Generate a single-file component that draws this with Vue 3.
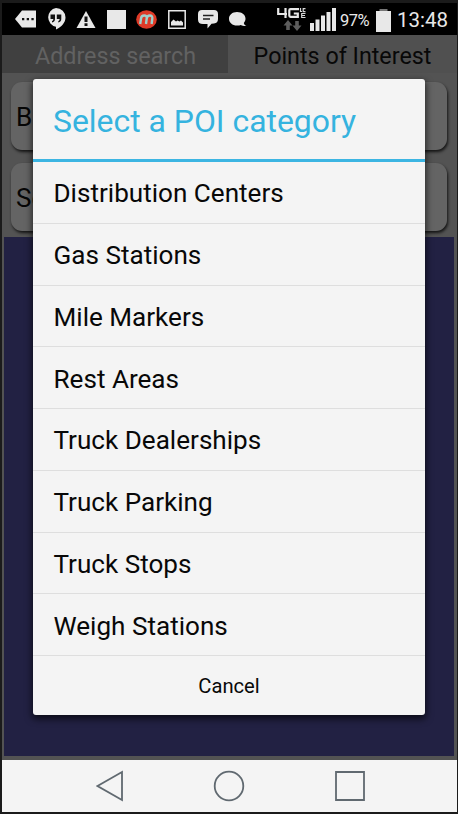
<script setup>
const categories = [
  'Distribution Centers',
  'Gas Stations',
  'Mile Markers',
  'Rest Areas',
  'Truck Dealerships',
  'Truck Parking',
  'Truck Stops',
  'Weigh Stations',
]
</script>

<template>
  <div class="device">
    <header class="status">
      <div class="notifications">
        <svg width="22" height="18" viewBox="0 0 22 18">
          <path d="M0 9 7 .5h14v17H7z" fill="#e8e8e8" />
          <path d="M7 8h2.300v2.300H7zm4.700 0H14v2.300h-2.300zm4.700 0h2.300v2.300h-2.300z" fill="#111" />
        </svg>
        <svg class="hangouts" width="20" height="22" viewBox="0 0 20 22">
          <path d="M10 0a9.500 9.500 0 0 1 9.500 9.500c0 5-4 9.500-9.500 12V18.700A9.500 9.500 0 0 1 10 0z" fill="#e8e8e8" />
          <path d="M4.500 6.500h4.500v4.500c0 2-1 3-3 3.500v-1.500c1-.4 1.300-1 1.300-2H4.500zm6.300 0h4.500v4.500c0 2-1 3-3 3.500v-1.500c1-.4 1.300-1 1.300-2h-2.800z" fill="#111" />
        </svg>
        <svg class="warning" width="20" height="17" viewBox="0 0 20 17">
          <path d="M10 0 19.500 17H.5z" fill="#e8e8e8" />
          <path d="M8.500 5.500h3v5.500h-3zm0 6.800h3V15h-3z" fill="#111" />
        </svg>
        <span class="square"></span>
        <svg class="round-m" width="21" height="19" viewBox="0 0 21 19">
          <ellipse cx="10.500" cy="9.500" rx="10.300" ry="9.300" fill="#dd3a27" />
          <path d="M4.200 14 5 8.500q.4-3 3.200-3 2.900 0 2.500 3L10 14M10.700 8.500q.5-3 3-3 3 0 2.600 3L15.600 14" fill="none" stroke="#9fd0cb" stroke-width="2.400" />
        </svg>
        <svg class="picture" width="18" height="19" viewBox="0 0 18 19">
          <path d="M.8.800h16.400v17.400H.8z" fill="#000" stroke="#e8e8e8" stroke-width="1.500" />
          <path d="M3 15.500v-3.500l2.500-2.500 2.500 2 1.500-1 2 1 1.500-1 2 2v3z" fill="#e8e8e8" />
        </svg>
        <svg class="message" width="20" height="19" viewBox="0 0 20 19">
          <path d="M4 0h12q4 0 4 4v5q0 4-4 4.500l-2.500.2-4 4.800v-4.500H5Q0 14 0 9.500V4Q0 0 4 0z" fill="#e8e8e8" />
          <path d="M5 5.500h10.500M5 9h7" stroke="#222" stroke-width="1.500" />
        </svg>
        <svg class="bubble" width="18" height="15" viewBox="0 0 18 15">
          <path d="M8 0c5 0 8.500 2.800 8.500 6.700 0 1.700-.7 3-1.700 4.200.4 1.500 1.200 2.500 2.600 3.100-2 .3-4-.2-5.500-1A12 12 0 0 1 8 13.500C3.300 13.500 0 10.500 0 6.700S3.300 0 8 0z" fill="#e8e8e8" />
        </svg>
      </div>
      <div class="system">
        <svg class="network" width="29" height="24" viewBox="0 0 29 24">
          <path d="M1.200 0v6H10M8.500 0v10M22 1.200h-8.500q-1.200 0-1.200 1.200v5.200q0 1.200 1.200 1.200h7.300V5.500h-4" fill="none" stroke="#e8e8e8" stroke-width="2.200" />
          <path d="M23.500 0v3.500H25M28.500.6h-2.300v3h2.300M28.500 5.500h-3.800v4h3.800M25 7.500h3" fill="none" stroke="#d8d8d8" stroke-width="1.200" />
          <path d="m11 12 4.500 5.500h-2.700V22H9.200v-4.500H6.500zM20 23l4.500-5.500h-2.700V13h-3.600v4.500h-2.700z" fill="#5d5d5d" />
        </svg>
        <svg class="signal" width="26" height="24" viewBox="0 0 26 24">
          <path d="M0 15h4v8H0zm5.500-3.500h4V23h-4zM11 7.500h4V23h-4zM16.500 4h4v19h-4zM22 0h4v23h-4z" fill="#e8e8e8" />
        </svg>
        <span class="percent">97%</span>
        <svg class="battery" width="15" height="23" viewBox="0 0 15 23">
          <path d="M3.500 0h8v2h-8z" fill="#777" />
          <path d="M0 2h15v21H0z" fill="#e8e8e8" />
        </svg>
        <span class="clock">13:48</span>
      </div>
    </header>

    <main class="app">
      <div class="tabs">
        <span class="tab inactive">Address search</span>
        <span class="tab">Points of Interest</span>
      </div>
      <div class="fields">
        <div class="field">B</div>
        <div class="field">Se</div>
      </div>
      <div class="map"></div>
    </main>

    <nav class="nav">
      <svg width="28" height="32" viewBox="0 0 28 32"><path d="M1.500 16 26 2v28z" /></svg>
      <svg width="32" height="32" viewBox="0 0 32 32"><circle cx="16" cy="16" r="14.300" /></svg>
      <svg width="32" height="32" viewBox="0 0 32 32"><path d="M2 2h28v28H2z" /></svg>
    </nav>

    <section class="dialog">
      <h1>Select a POI category</h1>
      <ul>
        <li v-for="name in categories" :key="name">{{ name }}</li>
      </ul>
      <button>Cancel</button>
    </section>
  </div>
</template>

<style>
body { margin: 0; background: #1b1b1b; }
</style>

<style scoped>
* { box-sizing: border-box; }
.device {
  position: relative;
  display: flex;
  flex-direction: column;
  width: 458px;
  height: 814px;
  padding: 3px 1px 2px 2px;
  background: #1b1b1b;
  font-family: Roboto, sans-serif;
  overflow: hidden;
}
svg { display: block; flex: none; }
.status {
  display: flex;
  justify-content: space-between;
  height: 32px;
  background: #000;
  color: #e8e8e8;
}
.notifications, .system { display: flex; align-items: center; }
.notifications { padding-left: 13px; }
.hangouts { margin-left: 9px; }
.warning { margin-left: 10px; }
.square { width: 19px; height: 19px; margin-left: 11px; background: #e8e8e8; }
.round-m { margin-left: 10px; }
.picture { margin-left: 11px; }
.message { margin-left: 12px; }
.bubble { margin-left: 11px; }
.system { padding: 2px 10px 0 0; }
.signal { margin-left: 4px; }
.percent { width: 31px; margin-left: 4px; font-size: 16.500px; letter-spacing: -.5px; }
.battery { margin-left: 5px; }
.clock { width: 50px; margin-left: 6px; font-size: 20.500px; line-height: 32px; white-space: nowrap; }
.app {
  display: flex;
  flex-direction: column;
  height: 725px;
  padding: 0 3px 4px 2px;
  background: #535353;
}
.tabs { display: flex; height: 38px; margin: 0 -3px 0 -2px; }
.tab {
  flex: 1;
  display: flex;
  justify-content: center;
  align-items: center;
  padding-top: 4px;
  background: #505050;
  color: #080808;
  font-size: 23.300px;
  white-space: nowrap;
}
.inactive { flex: 0 0 226px; padding-left: 1px; background: #404040; color: #626262; }
.fields { display: grid; gap: 13px; padding: 9px 7px 6px; }
.field {
  display: flex;
  align-items: center;
  height: 68px;
  padding: 2px 0 0 5px;
  border-radius: 11px;
  background: #646464;
  box-shadow: 1px 2px 3px #151515;
  color: #060606;
  font-size: 26px;
}
.map { flex: 1; background: #222143; }
.nav {
  display: flex;
  justify-content: center;
  align-items: center;
  gap: 89px;
  height: 52px;
  padding-left: 2px;
  background: #f4f4f4;
}
.nav path, .nav circle { fill: none; stroke: #606970; stroke-width: 1.800; }
.dialog {
  position: absolute;
  left: 33px;
  top: 79px;
  display: flex;
  flex-direction: column;
  width: 392px;
  height: 636px;
  border-radius: 3px;
  background: #f4f4f4;
  box-shadow: 0 3px 7px 1px rgba(0, 0, 0, .65);
}
h1 {
  display: flex;
  align-items: center;
  height: 83px;
  margin: 0;
  padding: 3px 0 0 20px;
  border-bottom: 3px solid #3cb5e2;
  color: #35b3df;
  font-size: 31.900px;
  font-weight: 400;
  white-space: nowrap;
}
ul {
  display: grid;
  grid-template-rows: repeat(8, 1fr);
  height: 494px;
  margin: 0;
  padding: 0;
  list-style: none;
}
li {
  display: flex;
  align-items: center;
  padding: 2px 0 0 20.500px;
  border-bottom: 1px solid #dedede;
  color: #080808;
  font-size: 26.100px;
  white-space: nowrap;
}
button {
  flex: 1;
  padding: 0;
  border: 0;
  background: none;
  color: #080808;
  font: 20.200px Roboto, sans-serif;
}
</style>
